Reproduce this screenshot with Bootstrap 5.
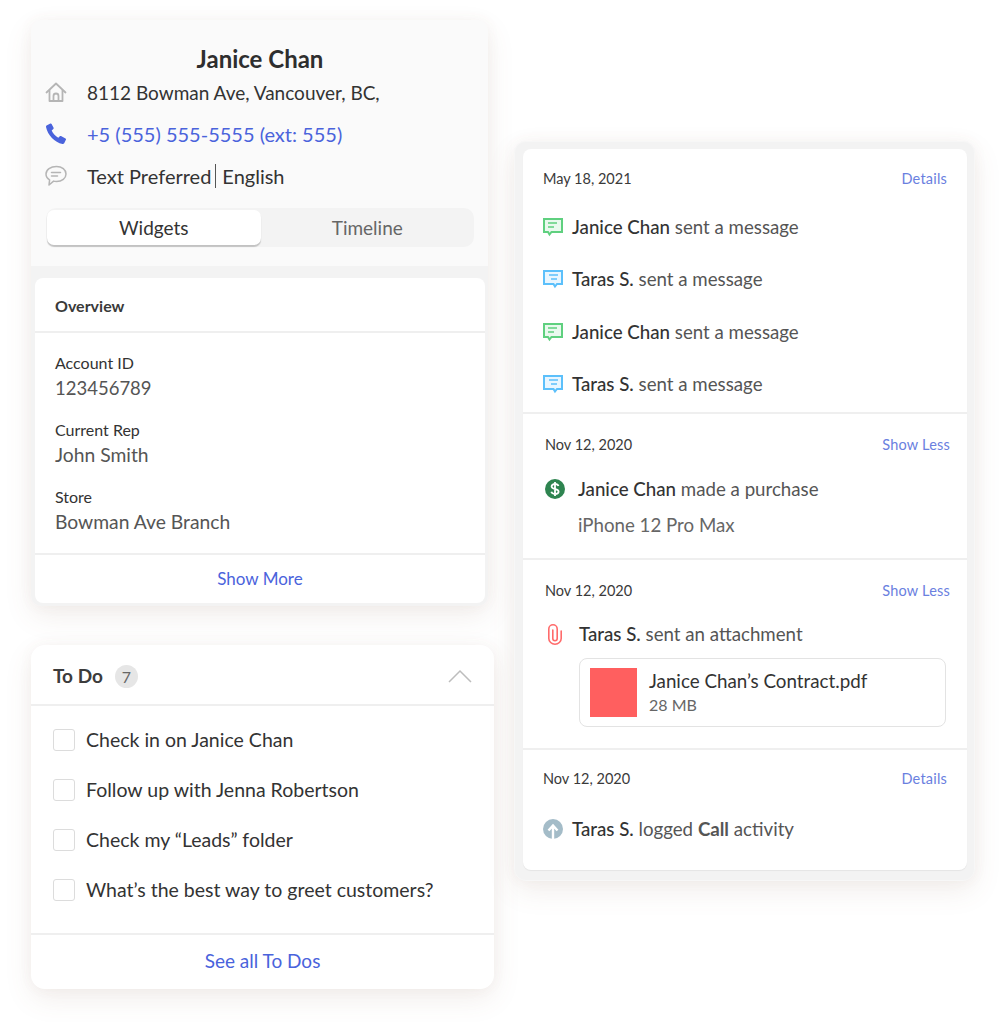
<!DOCTYPE html>
<html lang="en">
<head>
  <meta charset="UTF-8">
  <meta name="viewport" content="width=device-width, initial-scale=1.0">
  <title>Customer Profile</title>
  <link href="https://cdn.jsdelivr.net/npm/bootstrap@5.3.0/dist/css/bootstrap.min.css" rel="stylesheet">
  <style>
    body {
      font-family: 'Lato', 'Noto Sans', sans-serif;
      background-color: #fff;
      color: #333;
      margin: 0;
      height: 1022px;
      overflow: hidden;
    }
    a { color: #4a63dc; text-decoration: none; }
    b, strong { font-weight: 500; }
    .page-wrap { padding-left: 31px; align-items: flex-start; }

    /* left column */
    .left-col { width: 463px; padding-top: 20px; }
    .shadow-card { box-shadow: 0 10px 28px rgba(130, 90, 70, .10), 0 0 14px rgba(130, 90, 70, .05); }
    .profile-card { width: 457px; height: 586px; background: #fafafa; border-radius: 10px; overflow: hidden; }
    .profile-top { height: 246px; padding: 25px 14px 0 14px; }
    .profile-name { font-size: 24px; line-height: 28px; font-weight: 700; color: #2e2e2e; text-align: center; margin: 0 0 -2px; padding-left: 1px; }
    .info-row { height: 42px; font-size: 20px; color: #333; display: flex; align-items: center; gap: 20px; }
    .info-row svg { flex: none; width: 22px; height: 22px; }
    .info-addr { font-size: 19px; padding-top: 2px; }
    .info-sep { border-left: 1px solid #555; margin: 0 6px 0 4px; }
    .seg-wrap { display: flex; background: #f3f3f3; border-radius: 10px; height: 39px; margin: 11px 0 0 1px; padding: 2px 0 2px 1px; }
    .seg-item { flex: 1; text-align: center; font-size: 19px; line-height: 35px; color: #666; }
    .seg-item.is-active { background: #fff; color: #333; border-radius: 7px; box-shadow: 0 2px 1px rgba(0, 0, 0, .2); }
    .overview-strip { background: #f3f3f3; height: 340px; padding: 12px 3px 0 4px; }
    .overview-card { background: #fff; height: 325px; border-radius: 8px; }
    .overview-head { height: 55px; line-height: 55px; padding-left: 20px; font-size: 16px; font-weight: 700; color: #3a3a3a; border-bottom: 2px solid #efefef; }
    .overview-body { height: 220px; padding: 19px 20px 0; }
    .field-block { height: 67px; }
    .field-label { font-size: 16px; line-height: 22px; color: #333; }
    .field-value { font-size: 19.300px; line-height: 27px; color: #555; }
    .field-num { font-size: 18.500px; padding-top: 1px; }
    .overview-foot { border-top: 2px solid #efefef; text-align: center; font-size: 17px; line-height: 48px; }

    .todo-card { width: 463px; height: 344px; margin-top: 39px; background: #fff; border-radius: 14px; }
    .todo-head { height: 61px; padding: 3px 22px 0; border-bottom: 2px solid #efefef; display: flex; align-items: center; }
    .todo-title { font-size: 19px; font-weight: 700; color: #3c3c3c; }
    .todo-count { width: 23px; height: 23px; line-height: 23px; margin-left: 12px; text-align: center; border-radius: 50%; background: #e6e6e6; color: #666; font-size: 16px; }
    .todo-list { height: 228px; padding: 9px 22px 0; }
    .todo-row { height: 50px; display: flex; align-items: center; font-size: 19.500px; color: #333; gap: 11px; }
    .todo-box { width: 22px; height: 22px; border: 1px solid #dcdcdc; border-radius: 3px; background: #fff; flex: none; }
    .todo-foot { border-top: 2px solid #efefef; text-align: center; font-size: 19px; line-height: 52px; margin-top: -1px; }

    /* right column */
    .right-col { margin: 141px 0 0 20px; width: 461px; height: 740px; padding: 7px 7px 10px 8px; background: #f3f3f3; border: 1px solid #f7f7f7; border-radius: 12px; }
    .feed-card { background: #fff; height: 100%; border-radius: 8px; box-shadow: 0 1px 1px rgba(0, 0, 0, .06); }
    .feed-section { padding: 0 20px; border-bottom: 2px solid #efefef; }
    .feed-section:last-child { border-bottom: 0; }
    .feed-date { display: flex; justify-content: space-between; align-items: center; font-size: 14.500px; line-height: 20px; color: #3a3a3a; }
    .feed-date a { color: #6a80e0; letter-spacing: .2px; }
    .feed-row { display: flex; align-items: center; font-size: 18.700px; color: #555; }
    .feed-row svg { flex: none; width: 20px; height: 20px; }
    .feed-row b { color: #333; }
    .msg-row { height: 52.300px; gap: 9px; }
    .sec-one { height: 265px; padding-top: 20px; }
    .sec-one .feed-date { margin-bottom: 12px; }
    .sec-two { height: 146px; padding: 21px 17px 0 22px; }
    .sec-two .feed-row { height: 30px; margin-top: 19px; gap: 13px; }
    .feed-sub { font-size: 18.700px; line-height: 30px; color: #666; margin: 6px 0 0 33px; }
    .sec-three { height: 190px; padding: 21px 17px 0 22px; }
    .sec-three .feed-row { height: 30px; margin-top: 18px; gap: 14px; }
    .sec-three .feed-row svg { height: 22px; }
    .file-box { display: flex; align-items: center; gap: 12px; height: 69px; margin: 9px 4px 0 34px; padding-left: 10px; border: 1px solid #e3e3e3; border-radius: 8px; }
    .file-thumb { width: 47px; height: 49px; background: #ff5f5f; flex: none; }
    .file-name { font-size: 18.800px; line-height: 25px; color: #333; margin-top: -1px; }
    .file-size { font-size: 16px; line-height: 24px; color: #666; }
    .sec-four { padding-top: 19px; padding-bottom: 0; }
    .sec-four .feed-row { height: 30px; margin-top: 25px; gap: 9px; }
  </style>
</head>
<body>
  <div class="d-flex page-wrap">
    <div class="left-col">
      <!-- profile + overview -->
      <div class="profile-card shadow-card">
        <div class="profile-top">
          <h1 class="profile-name">Janice Chan</h1>
          <div class="info-row">
            <svg viewBox="0 0 22 22" fill="none" stroke="#b5b5b5" stroke-width="1.800" stroke-linejoin="round" stroke-linecap="round"><path d="M1.500 11.500 11 2.500l9.500 9"/><path d="M4.500 9.500v10.500h13V9.500"/><path d="M8.500 20v-5a2.500 2.500 0 0 1 5 0v5"/></svg>
            <span class="info-addr">8112 Bowman Ave, Vancouver, BC,</span>
          </div>
          <div class="info-row">
            <svg viewBox="0 0 22 22" fill="#4a63dc"><path d="M2 2.200 5.400.6c.5-.2 1 0 1.200.4l2 3.800c.2.400.1.900-.3 1.200L6.700 7.500c1 2.700 3.600 5.700 6.600 7.300l1.500-1.500c.3-.3.800-.4 1.200-.2l4.500 2.300c.5.200.7.800.4 1.300l-1.700 3.500c-.3.600-1 .9-1.700.8C9.500 19.400 2.800 12.300 1 4c-.1-.7.300-1.400 1-1.800z"/></svg>
            <a href="#">+5 (555) 555-5555 (ext: 555)</a>
          </div>
          <div class="info-row">
            <svg viewBox="0 0 22 22" fill="none" stroke="#b5b5b5" stroke-width="1.500" stroke-linecap="round" stroke-linejoin="round"><path d="M11.500 1.500c5.500 0 9.500 3.300 9.500 7.500s-4 7.500-9.500 7.500c-1 0-2-.1-2.900-.4L4 20l.6-5.200C2.400 13.500 1 11.400 1 9c0-4.200 4.500-7.500 10.500-7.500z"/><path d="M6.500 7.500h9M6.500 11h6"/></svg>
            <span>Text Preferred<span class="info-sep"></span>English</span>
          </div>
          <div class="seg-wrap">
            <div class="seg-item is-active">Widgets</div>
            <div class="seg-item">Timeline</div>
          </div>
        </div>
        <div class="overview-strip">
          <div class="overview-card">
            <div class="overview-head">Overview</div>
            <div class="overview-body">
              <div class="field-block">
                <div class="field-label">Account ID</div>
                <div class="field-value field-num">123456789</div>
              </div>
              <div class="field-block">
                <div class="field-label">Current Rep</div>
                <div class="field-value">John Smith</div>
              </div>
              <div class="field-block">
                <div class="field-label">Store</div>
                <div class="field-value">Bowman Ave Branch</div>
              </div>
            </div>
            <div class="overview-foot"><a href="#">Show More</a></div>
          </div>
        </div>
      </div>

      <!-- to do -->
      <div class="todo-card shadow-card">
        <div class="todo-head">
          <span class="todo-title">To Do</span>
          <span class="todo-count">7</span>
          <svg class="ms-auto" width="24" height="14" viewBox="0 0 24 14" fill="none" stroke="#bdbdbd" stroke-width="1.500"><path d="M1 13 12 2l11 11"/></svg>
        </div>
        <div class="todo-list">
          <div class="todo-row"><span class="todo-box"></span>Check in on Janice Chan</div>
          <div class="todo-row"><span class="todo-box"></span>Follow up with Jenna Robertson</div>
          <div class="todo-row"><span class="todo-box"></span>Check my “Leads” folder</div>
          <div class="todo-row"><span class="todo-box"></span>What’s the best way to greet customers?</div>
        </div>
        <div class="todo-foot"><a href="#">See all To Dos</a></div>
      </div>
    </div>

    <!-- timeline -->
    <div class="right-col shadow-card">
      <div class="feed-card">
        <div class="feed-section sec-one">
          <div class="feed-date"><span>May 18, 2021</span><a href="#">Details</a></div>
          <div class="feed-row msg-row">
            <svg viewBox="0 0 20 20" fill="none" stroke="#5fd07f" stroke-width="2"><path d="M1 2h18v13H8.500L6.500 17.500 5 15H1z" fill="#e9f9ee"/><path d="M5 6h9M5 10h6" stroke-width="1.400"/></svg>
            <span><b>Janice Chan</b> sent a message</span>
          </div>
          <div class="feed-row msg-row">
            <svg viewBox="0 0 20 20" fill="none" stroke="#5cc0fb" stroke-width="2"><path d="M1 2h18v13h-5l-2 2.500L10.500 15H1z" fill="#e9f6ff"/><path d="M6 6h9M8 10h6" stroke-width="1.400"/></svg>
            <span><b>Taras S.</b> sent a message</span>
          </div>
          <div class="feed-row msg-row">
            <svg viewBox="0 0 20 20" fill="none" stroke="#5fd07f" stroke-width="2"><path d="M1 2h18v13H8.500L6.500 17.500 5 15H1z" fill="#e9f9ee"/><path d="M5 6h9M5 10h6" stroke-width="1.400"/></svg>
            <span><b>Janice Chan</b> sent a message</span>
          </div>
          <div class="feed-row msg-row">
            <svg viewBox="0 0 20 20" fill="none" stroke="#5cc0fb" stroke-width="2"><path d="M1 2h18v13h-5l-2 2.500L10.500 15H1z" fill="#e9f6ff"/><path d="M6 6h9M8 10h6" stroke-width="1.400"/></svg>
            <span><b>Taras S.</b> sent a message</span>
          </div>
        </div>
        <div class="feed-section sec-two">
          <div class="feed-date"><span>Nov 12, 2020</span><a href="#">Show Less</a></div>
          <div class="feed-row">
            <svg viewBox="0 0 20 20"><circle cx="10" cy="10" r="10" fill="#2e8450"/><path d="M13.500 7c-.5-1.300-1.800-2-3.500-2-2 0-3.400 1-3.400 2.500 0 3.300 7 1.800 7 5 0 1.500-1.500 2.500-3.600 2.500-1.800 0-3.200-.8-3.700-2.200M10 3v14" fill="none" stroke="#fff" stroke-width="1.800"/></svg>
            <span><b>Janice Chan</b> made a purchase</span>
          </div>
          <div class="feed-sub">iPhone 12 Pro Max</div>
        </div>
        <div class="feed-section sec-three">
          <div class="feed-date"><span>Nov 12, 2020</span><a href="#">Show Less</a></div>
          <div class="feed-row">
            <svg viewBox="0 0 20 22" fill="none" stroke="#ff6b6b" stroke-width="1.600" stroke-linecap="round"><path d="M16.200 8v7.500a6.200 5.700 0 0 1-12.400 0V6a4.200 4.200 0 0 1 8.400 0v9.500a2.200 2.200 0 0 1-4.400 0V7"/></svg>
            <span><b>Taras S.</b> sent an attachment</span>
          </div>
          <div class="file-box">
            <div class="file-thumb"></div>
            <div>
              <div class="file-name">Janice Chan’s Contract.pdf</div>
              <div class="file-size">28 MB</div>
            </div>
          </div>
        </div>
        <div class="feed-section sec-four">
          <div class="feed-date"><span>Nov 12, 2020</span><a href="#">Details</a></div>
          <div class="feed-row">
            <svg viewBox="0 0 20 20"><circle cx="10" cy="10" r="10" fill="#a4bcc8"/><path d="M10 20V8M5.500 11.500 10 6.500l4.500 5" fill="none" stroke="#fff" stroke-width="2.400"/></svg>
            <span><b>Taras S.</b> logged <strong class="fw-bold">Call</strong> activity</span>
          </div>
        </div>
      </div>
    </div>
  </div>
  <script src="https://cdn.jsdelivr.net/npm/bootstrap@5.3.0/dist/js/bootstrap.bundle.min.js"></script>
</body>
</html>
